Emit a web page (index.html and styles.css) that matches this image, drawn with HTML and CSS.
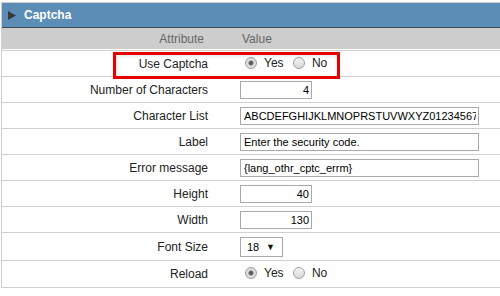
FILE: index.html
```html
<!DOCTYPE html>
<html lang="en">
<head>
  <meta charset="UTF-8" />
  <meta name="viewport" content="width=device-width, initial-scale=1" />
  <title>Captcha</title>
  <link rel="stylesheet" href="styles.css">
</head>
<body>
  <div class="panel">
    <div class="panel-title">
      <svg class="arrow" width="8" height="9" viewBox="0 0 8 9"><polygon points="0,0 8,4.5 0,9" fill="#3a3a3a"/></svg>
      <span>Captcha</span>
    </div>

    <table class="settings">
      <thead>
        <tr>
          <th class="attr">Attribute</th>
          <th class="val">Value</th>
        </tr>
      </thead>
      <tbody>
        <tr class="first">
          <td class="attr">Use Captcha</td>
          <td class="val">
            <label class="radio"><input type="radio" name="use" checked> Yes</label>
            <label class="radio"><input type="radio" name="use"> No</label>
          </td>
        </tr>
        <tr>
          <td class="attr">Number of Characters</td>
          <td class="val"><input class="num" type="text" value="4"></td>
        </tr>
        <tr>
          <td class="attr">Character List</td>
          <td class="val"><input class="wide" type="text" value="ABCDEFGHIJKLMNOPRSTUVWXYZ0123456789"></td>
        </tr>
        <tr>
          <td class="attr">Label</td>
          <td class="val"><input class="wide" type="text" value="Enter the security code."></td>
        </tr>
        <tr>
          <td class="attr">Error message</td>
          <td class="val"><input class="wide" type="text" value="{lang_othr_cptc_errm}"></td>
        </tr>
        <tr>
          <td class="attr">Height</td>
          <td class="val"><input class="num" type="text" value="40"></td>
        </tr>
        <tr>
          <td class="attr">Width</td>
          <td class="val"><input class="num" type="text" value="130"></td>
        </tr>
        <tr class="tall">
          <td class="attr">Font Size</td>
          <td class="val">
            <span class="select-wrap">
              <select>
                <option>12</option>
                <option>14</option>
                <option>16</option>
                <option selected>18</option>
                <option>20</option>
              </select>
            </span>
          </td>
        </tr>
        <tr class="first">
          <td class="attr">Reload</td>
          <td class="val">
            <label class="radio"><input type="radio" name="reload" checked> Yes</label>
            <label class="radio"><input type="radio" name="reload"> No</label>
          </td>
        </tr>
      </tbody>
    </table>

    <div class="highlight"></div>
  </div>
</body>
</html>
```

FILE: styles.css
```css
body {
  margin: 0;
  font-family: 'Liberation Sans', Arial, sans-serif;
  font-size: 12px;
  color: #222;
  background: #fff;
}

.panel {
  position: relative;
  margin: 2px 0 0 1px;
  border-top: 1px solid #cfcfcf;
  border-left: 1px solid #cfcfcf;
}

.panel-title {
  display: flex;
  align-items: center;
  gap: 8px;
  height: 24px;
  padding-left: 6px;
  background: #5b8db6;
  border-bottom: 1px solid #3d4b58;
  color: #fff;
  font-weight: bold;
  font-size: 12px;
}

.settings {
  width: 100%;
  border-collapse: separate;
  border-spacing: 0;
}

.settings th {
  height: 21px;
  padding: 0;
  background: #cdcdcd;
  border-bottom: 1px solid #fff;
  color: #666;
  font-weight: normal;
}

.settings th.attr {
  width: 202px;
  padding-right: 28px;
  text-align: right;
}

.settings th.val {
  padding-left: 10px;
  text-align: left;
}

.settings td {
  height: 25px;
  padding: 0;
  border-bottom: 1px solid #d0d0d0;
  vertical-align: middle;
}

.settings tr.first td {
  height: 26px;
}

.settings tbody tr:first-child td {
  border-top: 1px solid #d0d0d0;
  height: 25px;
}

.settings tr.tall td {
  height: 27px;
}

.settings td.attr {
  width: 206px;
  padding-right: 24px;
  text-align: right;
  line-height: 12px;
}

.settings td.val {
  padding-left: 8px;
  text-align: left;
}

.settings input[type="text"] {
  box-sizing: border-box;
  height: 18px;
  margin: 0;
  padding: 0 2px 0 3px;
  border: 1px solid #a9a9a9;
  font-family: 'Liberation Sans', Arial, sans-serif;
  font-size: 11px;
  color: #000;
  display: block;
}

.settings input.num {
  width: 72px;
  text-align: right;
}

.settings input.wide {
  width: 239px;
}

.radio {
  display: inline-flex;
  align-items: center;
  gap: 7px;
  margin-left: 5px;
  margin-right: 1px;
  font-size: 12px;
}

.radio input {
  appearance: none;
  width: 12px;
  height: 12px;
  margin: 0;
  border: 1px solid #a0a0a0;
  border-radius: 50%;
  background: linear-gradient(#f4f4f4, #d8d8d8);
  box-sizing: border-box;
}

.radio input:checked {
  background: radial-gradient(circle, #555 0, #666 2px, #e4e4e4 3px, #d2d2d2 6px);
}

.select-wrap {
  position: relative;
  display: inline-block;
}

.select-wrap select {
  appearance: none;
  display: block;
  box-sizing: border-box;
  width: 43px;
  height: 20px;
  margin: 0;
  padding: 0 0 0 6px;
  border: 1px solid #a9a9a9;
  border-radius: 0;
  background: #fff;
  font-family: 'Liberation Sans', Arial, sans-serif;
  font-size: 11px;
  color: #000;
}

.select-wrap::after {
  content: '\25BC';
  position: absolute;
  right: 8px;
  top: 5px;
  font-size: 9px;
  color: #111;
  pointer-events: none;
}

.highlight {
  position: absolute;
  left: 111px;
  top: 49px;
  width: 227px;
  height: 27px;
  box-sizing: border-box;
  border: 3px solid #e60000;
  box-shadow: inset 2px 2px 3px rgba(0, 0, 0, 0.08);
  pointer-events: none;
}
```
